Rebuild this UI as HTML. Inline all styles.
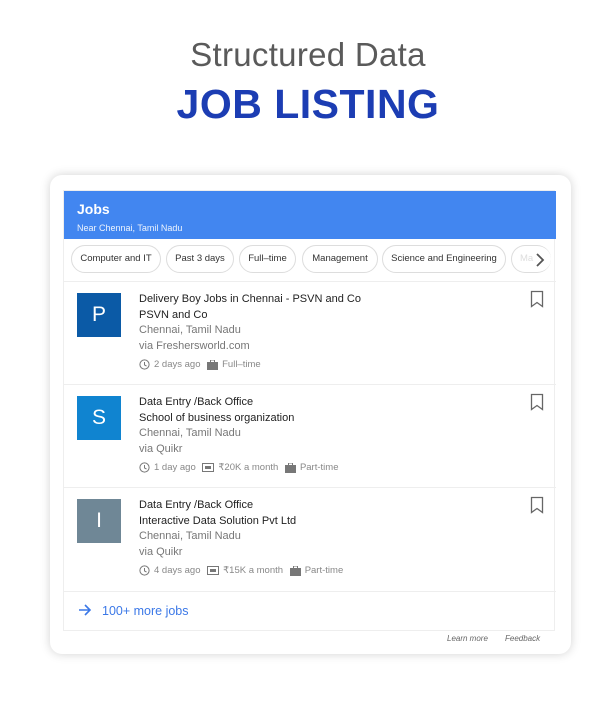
<!DOCTYPE html>
<html><head><meta charset="utf-8"><style>
*{margin:0;padding:0;box-sizing:border-box}
body{width:616px;height:718px;background:#fff;font-family:"Liberation Sans",Arial,sans-serif;position:relative;overflow:hidden}
.h1{position:absolute;top:36px;left:0;width:616px;text-align:center;font-size:33px;color:#5a5a5a;font-weight:300;letter-spacing:0.3px}
.h2{position:absolute;top:81px;left:0;width:616px;text-align:center;font-size:41px;color:#1c3db3;font-weight:bold;letter-spacing:0.5px}
.card{position:absolute;left:50px;top:175px;width:521px;height:479px;border-radius:12px;background:#fff;box-shadow:0 0 10px rgba(0,0,0,.18)}
.inner{position:absolute;left:63px;top:190px;width:492px;height:441px;border:1px solid #eee;background:#fff}
.hdr{position:absolute;left:0;top:0;width:492px;height:48px;background:#4286f0;color:#fff;padding:10px 13px}
.hdr b{font-size:14px;display:block;line-height:17px}
.hdr span{font-size:9px;opacity:.9;line-height:12px}
.chip{position:absolute;top:54px;height:28px;border:1px solid #ddd;border-radius:14px;font-size:9.5px;color:#333;line-height:26px;text-align:center;white-space:nowrap}
.item{position:absolute;left:0;width:492px;height:104px;border-top:1px solid #eee}
.logo{position:absolute;left:13px;top:11px;width:44px;height:44px;color:#fff;font-size:21px;text-align:center;line-height:43px}
.t{position:absolute;left:75px;top:10px;font-size:11px;color:#222;line-height:15.5px}
.g{color:#777}
.meta{position:absolute;left:75px;top:77px;font-size:9.5px;color:#888;display:flex;align-items:center;gap:4px}
.bm{position:absolute;right:12px;top:8px}
.more{position:absolute;left:0;top:400px;width:492px;height:41px;border-top:1px solid #eee;color:#3b78e7;font-size:12.5px;padding:12px 14px}
.ft{position:absolute;top:634px;font-size:8px;font-style:italic;color:#666}
</style></head><body>
<div class="h1">Structured Data</div>
<div class="h2">JOB LISTING</div>
<div class="card"></div>
<div class="inner">
<div class="hdr"><b>Jobs</b><span>Near Chennai, Tamil Nadu</span></div>
<div class="chip" style="left:7px;width:90px">Computer and IT</div>
<div class="chip" style="left:102px;width:68px">Past 3 days</div>
<div class="chip" style="left:175px;width:57px">Full–time</div>
<div class="chip" style="left:238px;width:76px">Management</div>
<div class="chip" style="left:318px;width:124px">Science and Engineering</div>
<div class="chip" style="left:447px;width:40px;color:#ddd;border-right:none;text-align:left;padding-left:8px">Ma</div>
<svg style="position:absolute;left:470px;top:61px" width="12" height="16" viewBox="0 0 12 16"><path d="M3 2l6 6-6 6" stroke="#555" stroke-width="1.8" fill="none"/></svg>
<div class="item" style="top:90px">
<div class="logo" style="background:#0b5aa6">P</div>
<div class="t">Delivery Boy Jobs in Chennai - PSVN and Co<br>PSVN and Co<br><span class="g">Chennai, Tamil Nadu<br>via Freshersworld.com</span></div>
<div class="meta"><svg width="11" height="11"><circle cx="5.5" cy="5.5" r="4.6" stroke="#777" fill="none"/><path d="M5.5 3v3l2 1" stroke="#777" fill="none"/></svg>2 days ago&nbsp;<svg width="11" height="10"><rect x="0" y="2" width="11" height="8" fill="#777"/><rect x="3.5" y="0" width="4" height="3" stroke="#777" fill="none"/></svg>Full–time</div>
<svg class="bm" width="14" height="18"><path d="M1.5 1.5h11v15l-5.5-4-5.5 4z" stroke="#666" stroke-width="1.3" fill="none"/></svg>
</div>
<div class="item" style="top:193px">
<div class="logo" style="background:#1084d0">S</div>
<div class="t">Data Entry /Back Office<br>School of business organization<br><span class="g">Chennai, Tamil Nadu<br>via Quikr</span></div>
<div class="meta"><svg width="11" height="11"><circle cx="5.5" cy="5.5" r="4.6" stroke="#777" fill="none"/><path d="M5.5 3v3l2 1" stroke="#777" fill="none"/></svg>1 day ago&nbsp;<svg width="12" height="9"><rect x=".5" y=".5" width="11" height="8" stroke="#777" fill="none"/><rect x="3" y="3" width="6" height="3" fill="#777"/></svg>₹20K a month&nbsp;<svg width="11" height="10"><rect x="0" y="2" width="11" height="8" fill="#777"/><rect x="3.5" y="0" width="4" height="3" stroke="#777" fill="none"/></svg>Part-time</div>
<svg class="bm" width="14" height="18"><path d="M1.5 1.5h11v15l-5.5-4-5.5 4z" stroke="#666" stroke-width="1.3" fill="none"/></svg>
</div>
<div class="item" style="top:296px">
<div class="logo" style="background:#6f8796">I</div>
<div class="t">Data Entry /Back Office<br>Interactive Data Solution Pvt Ltd<br><span class="g">Chennai, Tamil Nadu<br>via Quikr</span></div>
<div class="meta"><svg width="11" height="11"><circle cx="5.5" cy="5.5" r="4.6" stroke="#777" fill="none"/><path d="M5.5 3v3l2 1" stroke="#777" fill="none"/></svg>4 days ago&nbsp;<svg width="12" height="9"><rect x=".5" y=".5" width="11" height="8" stroke="#777" fill="none"/><rect x="3" y="3" width="6" height="3" fill="#777"/></svg>₹15K a month&nbsp;<svg width="11" height="10"><rect x="0" y="2" width="11" height="8" fill="#777"/><rect x="3.5" y="0" width="4" height="3" stroke="#777" fill="none"/></svg>Part-time</div>
<svg class="bm" width="14" height="18"><path d="M1.5 1.5h11v15l-5.5-4-5.5 4z" stroke="#666" stroke-width="1.3" fill="none"/></svg>
</div>
<div class="more"><svg width="14" height="12" style="vertical-align:-1px;margin-right:10px"><path d="M1 6h11M7 1l5 5-5 5" stroke="#3b78e7" stroke-width="1.6" fill="none"/></svg>100+ more jobs</div>
</div>
<div class="ft" style="left:447px">Learn more</div>
<div class="ft" style="left:505px">Feedback</div>
</body></html>
